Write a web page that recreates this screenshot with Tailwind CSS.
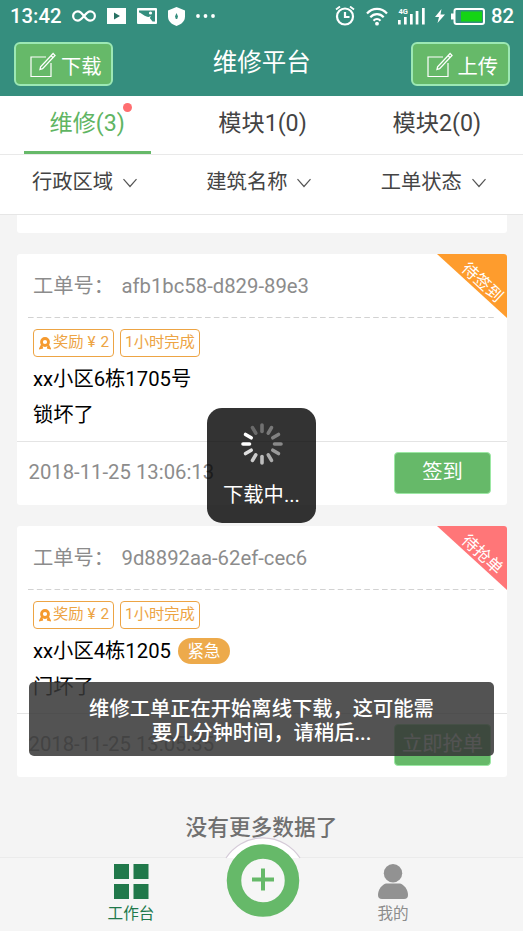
<!DOCTYPE html>
<html lang="zh-CN">
<head>
<meta charset="utf-8">
<title>维修平台</title>
<script src="https://cdn.jsdelivr.net/npm/@tailwindcss/browser@4"></script>
</head>
<body class="relative flex h-[931px] w-[523px] flex-col overflow-hidden bg-[#f4f4f4] font-['Roboto','Noto_Sans_CJK_SC',sans-serif] text-[20.3px] leading-none whitespace-nowrap">

<svg class="hidden">
  <symbol id="edit" viewBox="0 0 27 27"><path d="M17 5H2v19.500h20V11" fill="none" stroke="#fff" stroke-width="1.200"/><path d="m11 17.500 2.600-.900L26 3.400l-1.900-1.900-12.500 13.200ZM22 3.600l1.900 1.900" fill="none" stroke="#fff" stroke-width="1.300"/></symbol>
  <symbol id="medal" viewBox="0 0 12 13"><circle cx="6" cy="5" r="3.500" fill="none" stroke="#f59a2f" stroke-width="2.800"/><path d="M3 8 1.500 11l2.500-.5M9 8l1.500 3-2.500-.5" fill="none" stroke="#f59a2f" stroke-width="2.200"/></symbol>
  <symbol id="chev" viewBox="0 0 16 10"><path d="m1.500 1.200 6.500 7.300 6.500-7.300" fill="none" stroke="#555" stroke-width="1.200"/></symbol>
</svg>

<header class="h-[96px] shrink-0 bg-[#358e7e] text-white">
  <div class="flex h-8 items-center justify-between pt-px pr-[9px] pl-[10px] text-[20.300px] font-medium">
    <div class="flex items-center">
      <span class="w-[62px]">13:42</span>
      <svg class="h-[14px] w-[24px]" viewBox="0 0 24 14"><path d="M12 7C9.500 3.500 8 2.300 5.800 2.300a4.700 4.700 0 0 0 0 9.400C8 11.700 9.500 10 12 7s4-4.700 6.200-4.700a4.700 4.700 0 0 1 0 9.400c-2.200 0-3.700-1.200-6.200-4.700Z" fill="none" stroke="#fff" stroke-width="2.200"/></svg>
      <svg class="ml-[11px] h-[16px] w-[19px]" viewBox="0 0 19 16"><path d="M0 0h19v16H0z" fill="#fff"/><path d="m7 4.500 6 3.500-6 3.500Z" fill="#277163"/></svg>
      <svg class="ml-[11px] h-[16px] w-[20px]" viewBox="0 0 20 16"><rect width="20" height="16" rx="1" fill="#fff"/><path d="M2 2.500h16v11h-2.500l-2.700-3.500 1.200-2-2.500 1C8 9 5 5 2 4.500Z" fill="#358e7e"/><circle cx="13.500" cy="5" r="1.600" fill="#fff"/></svg>
      <svg class="ml-[11px] h-[19px] w-[17px]" viewBox="0 0 17 19"><path d="M8.500 0 17 3.500v6c0 5-4 8-8.500 9.500C4 17.500 0 14.500 0 9.500v-6Z" fill="#fff"/><path d="M8.500 6 10 9.500 9.200 12H7.800L7 9.500Z" fill="#358e7e"/></svg>
      <svg class="ml-[11px] h-[4px] w-[19px]" viewBox="0 0 19 4"><g fill="#fff"><circle cx="2" cy="2" r="1.900"/><circle cx="9.500" cy="2" r="1.900"/><circle cx="17" cy="2" r="1.900"/></g></svg>
    </div>
    <div class="flex items-center">
      <svg class="h-[20px] w-[20px]" viewBox="0 0 20 20"><g fill="none" stroke="#fff" stroke-width="2.200"><circle cx="10" cy="10.500" r="8"/><path d="M10 6v5h4.500"/><path d="m1 3.500 4-3M19 3.500l-4-3" stroke-width="1.800"/></g></svg>
      <svg class="ml-[11px] h-[19px] w-[22px]" viewBox="0 0 22 19"><g fill="none" stroke="#fff" stroke-width="2.200"><path d="M1 6.500C6.500.300 15.500.300 21 6.500M4.300 10.200c3.800-4 9.600-4 13.400 0M7.500 13.700c2-2 5-2 7 0"/></g><circle cx="11" cy="16.700" r="1.900" fill="#fff"/></svg>
      <svg class="ml-[10px] h-[18px] w-[27px]" viewBox="0 0 27 18"><path d="M0 13h2.700v4.500H0zM6 10h2.700v7.500H6zM12 7h2.700v10.500H12zM17.700 4h2.700v13.500h-2.700zM24 1h2.700v16.500H24z" fill="#fff"/><text x=".5" y="7" font-size="7.500" font-weight="700" fill="#fff">4G</text></svg>
      <svg class="ml-[10px] h-[14px] w-[10px]" viewBox="0 0 10 14"><path d="M6.500 0 0 8h4l-1.500 6L10 5.500H5.500Z" fill="#fff"/></svg>
      <svg class="ml-[6px] h-[17px] w-[34px]" viewBox="0 0 34 17"><rect x="3.500" y="1" width="29.500" height="15" rx="2" fill="none" stroke="#fff" stroke-width="2"/><path d="M0 5.500h3v6H0z" fill="#fff"/><path d="M10 3.500h21v10H10z" fill="#14d414"/></svg>
      <span class="ml-[6px]">82</span>
    </div>
  </div>
  <div class="flex items-start justify-between pr-[13.500px] pl-[14px] pt-[10px]">
    <div class="flex h-[44px] w-[99px] items-center rounded-[6px] border-2 border-[#9ce8b4] bg-[#66b969] pl-[13px] pt-[2px]"><svg class="mr-[5px] h-[27px] w-[27px]"><use href="#edit"/></svg><span class="pt-[4px]">下载</span></div>
    <h1 class="pt-[9px] text-[24.500px] font-normal">维修平台</h1>
    <div class="flex h-[44px] w-[99px] items-center rounded-[6px] border-2 border-[#9ce8b4] bg-[#66b969] pl-[13px] pt-[2px]"><svg class="mr-[5px] h-[27px] w-[27px]"><use href="#edit"/></svg><span class="pt-[4px]">上传</span></div>
  </div>
</header>

<nav class="grid h-[59px] shrink-0 grid-cols-3 border-b border-[#e9e9e9] bg-white text-[23.200px] text-[#444]">
  <div class="relative flex justify-center pt-[16px] text-[#5fb563]">维修(3)<i class="absolute top-[7px] left-[123px] size-[9px] rounded-full bg-[#ff6e70]"></i><i class="absolute bottom-0 left-[24px] h-[3px] w-[127px] bg-[#66b969]"></i></div>
  <div class="flex justify-center pt-[16px] pl-[2px]">模块1(0)</div>
  <div class="flex justify-center pt-[16px] pl-[2px]">模块2(0)</div>
</nav>
<div class="grid h-[60px] shrink-0 grid-cols-3 border-b border-[#e6e6e6] bg-white text-[#444]">
  <div class="flex items-center pb-[4px] pl-[32px]">行政区域<svg class="ml-[9px] h-[10px] w-[16px]"><use href="#chev"/></svg></div>
  <div class="flex items-center pb-[4px] pl-[32px]">建筑名称<svg class="ml-[9px] h-[10px] w-[16px]"><use href="#chev"/></svg></div>
  <div class="flex items-center pb-[4px] pl-[32px]">工单状态<svg class="ml-[9px] h-[10px] w-[16px]"><use href="#chev"/></svg></div>
</div>

<main class="flex flex-1 flex-col px-[17px]">
  <div class="h-[18px] w-[490px] shrink-0 rounded-b-[3px] bg-white"></div>

  <article class="relative mt-[21px] h-[251px] w-[490px] shrink-0 overflow-hidden rounded-[3px] bg-white">
    <div class="mr-[10px] ml-[11px] flex h-[63px] items-center pt-px pl-[5px] text-[#8c8c8c]"><span class="w-[88.500px]">工单号：</span><span>afb1bc58-d829-89e3</span></div>
    <svg class="ml-[11px] h-px w-[469px]"><path d="M0 .5h469" stroke="#d2d2d2" stroke-dasharray="5.600 3.250"/></svg>
    <div class="absolute top-0 right-0 h-[64px] w-[70px] bg-[#fe9c2d] text-[16.400px] text-white [clip-path:polygon(0_0,100%_0,100%_100%)]"><span class="absolute top-[20.500px] left-[20px] w-[50px] rotate-[43deg]">待签到</span></div>
    <div class="flex gap-[6px] pt-[11px] pl-[16px] text-[15.300px] text-[#eda444]">
      <div class="flex h-[28px] w-[81px] items-center rounded-[4px] border-[1.500px] border-[#eda444] pl-[5px]"><svg class="mr-[2px] h-[13px] w-[12px]"><use href="#medal"/></svg>奖励<span class="ml-[4px] w-[10px]">¥</span><span class="ml-[3px]">2</span></div>
      <div class="flex h-[28px] w-[80px] items-center justify-center rounded-[4px] border-[1.500px] border-[#eda444]">1小时完成</div>
    </div>
    <div class="flex h-[43px] items-center pt-px pl-[16px]">xx小区6栋1705号</div>
    <div class="flex h-[42px] items-start border-b border-[#e4e4e4] pt-[5px] pl-[16px]">锁坏了</div>
    <div class="flex justify-between pr-[16px] pl-[11.500px] text-[#8c8c8c]"><span class="pt-[20px]">2018-11-25 13:06:13</span><button class="mt-[10px] h-[42px] w-[97px] rounded-[4px] border border-[#9ce8a4] bg-[#66b969] pb-[2px] text-white">签到</button></div>
  </article>

  <article class="relative mt-[21px] h-[251px] w-[490px] shrink-0 overflow-hidden rounded-[3px] bg-white">
    <div class="mr-[10px] ml-[11px] flex h-[63px] items-center pt-px pl-[5px] text-[#8c8c8c]"><span class="w-[88.500px]">工单号：</span><span>9d8892aa-62ef-cec6</span></div>
    <svg class="ml-[11px] h-px w-[469px]"><path d="M0 .5h469" stroke="#d2d2d2" stroke-dasharray="5.600 3.250"/></svg>
    <div class="absolute top-0 right-0 h-[64px] w-[70px] bg-[#ff7678] text-[16.400px] text-white [clip-path:polygon(0_0,100%_0,100%_100%)]"><span class="absolute top-[20.500px] left-[20px] w-[50px] rotate-[43deg]">待抢单</span></div>
    <div class="flex gap-[6px] pt-[11px] pl-[16px] text-[15.300px] text-[#eda444]">
      <div class="flex h-[28px] w-[81px] items-center rounded-[4px] border-[1.500px] border-[#eda444] pl-[5px]"><svg class="mr-[2px] h-[13px] w-[12px]"><use href="#medal"/></svg>奖励<span class="ml-[4px] w-[10px]">¥</span><span class="ml-[3px]">2</span></div>
      <div class="flex h-[28px] w-[80px] items-center justify-center rounded-[4px] border-[1.500px] border-[#eda444]">1小时完成</div>
    </div>
    <div class="flex h-[43px] items-center pt-px pl-[16px]">xx小区4栋1205<span class="ml-[7px] flex h-[26px] w-[52px] items-center justify-center rounded-full bg-[#edaa4b] pt-[2px] text-[16.500px] text-white">紧急</span></div>
    <div class="flex h-[42px] items-start border-b border-[#e4e4e4] pt-[5px] pl-[16px]">门坏了</div>
    <div class="flex justify-between pr-[16px] pl-[11.500px] text-[#8c8c8c]"><span class="pt-[20px]">2018-11-25 13:05:35</span><button class="mt-[10px] h-[42px] w-[97px] rounded-[4px] border border-[#9ce8a4] bg-[#66b969] pb-[2px] text-white">立即抢单</button></div>
  </article>

  <p class="pt-[40px] text-center text-[21.700px] font-medium text-[#707070]">没有更多数据了</p>
</main>

<footer class="relative flex h-[74px] shrink-0 justify-between border-t border-[#ebebeb] bg-[#f5f5f5] px-[91px] pt-[6px] text-[15.600px]">
  <div class="flex w-[80px] flex-col items-center text-[#20784a]">
    <svg class="h-[36px] w-[36px]" viewBox="0 0 36 36"><path d="M1 0h15v15H1zM20.500 0h15v15h-15zM1 20h15v15H1zM20.500 20h15v15h-15z" fill="#20784a"/></svg>
    <span class="mt-[7px]">工作台</span>
  </div>
  <svg class="absolute -top-[21px] left-[217px] h-[90px] w-[92px]" viewBox="0 0 92 90"><path d="M9 21a44 44 0 0 1 74 0Z" fill="#fff"/><path d="M9 21a44 44 0 0 1 74 0" fill="none" stroke="#d5cbd8" stroke-width="1.200"/><circle cx="46" cy="43.500" r="29" fill="#f6f6f6" stroke="#66b969" stroke-width="14.500"/><path d="M35 42.500h22M46 31.500v22" stroke="#66b969" stroke-width="4"/></svg>
  <div class="flex w-[80px] flex-col items-center pl-[2px] text-[#8c8c8c]">
    <svg class="h-[36px] w-[32px]" viewBox="0 0 32 36"><g fill="#929292"><circle cx="16" cy="9.300" r="9.200"/><path d="M9 19.500h14c4 1 8 6 8 11.500q0 4-4 4H5q-4 0-4-4c0-5.500 4-10.500 8-11.500Z"/></g></svg>
    <span class="mt-[7px]">我的</span>
  </div>
</footer>

<div class="absolute top-[408px] left-[207px] flex h-[115px] w-[109px] flex-col items-center rounded-[15px] bg-black/80 pt-[15px] text-white">
  <svg class="h-[42px] w-[42px]" viewBox="-21 -21 42 42"><g stroke-width="3.600" stroke-linecap="round" stroke="#fff">
    <path d="M-12.500 0H-19"/><path d="M-12.500 0H-19" transform="rotate(30)"/>
    <path d="M-12.500 0H-19" transform="rotate(-30)" opacity=".85"/><path d="M-12.500 0H-19" transform="rotate(-60)" opacity=".75"/><path d="M-12.500 0H-19" transform="rotate(-90)" opacity=".68"/><path d="M-12.500 0H-19" transform="rotate(-120)" opacity=".6"/><path d="M-12.500 0H-19" transform="rotate(-150)" opacity=".5"/><path d="M-12.500 0H-19" transform="rotate(180)" opacity=".42"/><path d="M-12.500 0H-19" transform="rotate(150)" opacity=".38"/><path d="M-12.500 0H-19" transform="rotate(120)" opacity=".34"/><path d="M-12.500 0H-19" transform="rotate(90)" opacity=".3"/><path d="M-12.500 0H-19" transform="rotate(60)" opacity=".27"/>
  </g></svg>
  <span class="mt-[20px]">下载中...</span>
</div>

<div class="absolute top-[682px] left-[29px] h-[74px] w-[465px] rounded-[5px] bg-[#373737]/86 pt-[15px] text-center leading-[24px] font-medium text-white">维修工单正在开始离线下载，这可能需<br>要几分钟时间，请稍后...</div>
</body>
</html>
